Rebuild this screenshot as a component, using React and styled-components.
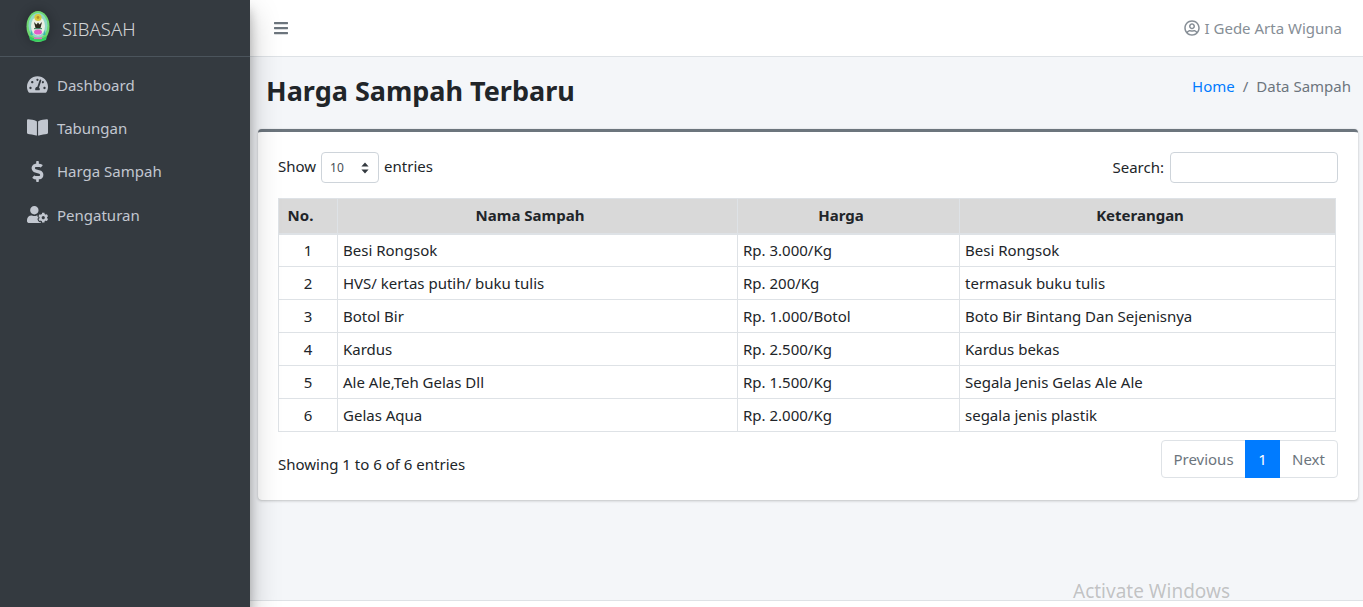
import styled, { createGlobalStyle } from "styled-components";
import {
  FaTachometerAlt,
  FaBookOpen,
  FaDollarSign,
  FaUserCog,
  FaBars,
  FaRegUserCircle,
} from "react-icons/fa";

const FONT = `"Noto Sans", "Open Sans", "Liberation Sans", sans-serif`;

const menu = [
  { icon: <FaTachometerAlt />, label: "Dashboard" },
  { icon: <FaBookOpen />, label: "Tabungan" },
  { icon: <FaDollarSign />, label: "Harga Sampah" },
  { icon: <FaUserCog />, label: "Pengaturan" },
];

const rows = [
  ["1", "Besi Rongsok", "Rp. 3.000/Kg", "Besi Rongsok"],
  ["2", "HVS/ kertas putih/ buku tulis", "Rp. 200/Kg", "termasuk buku tulis"],
  ["3", "Botol Bir", "Rp. 1.000/Botol", "Boto Bir Bintang Dan Sejenisnya"],
  ["4", "Kardus", "Rp. 2.500/Kg", "Kardus bekas"],
  ["5", "Ale Ale,Teh Gelas Dll", "Rp. 1.500/Kg", "Segala Jenis Gelas Ale Ale"],
  ["6", "Gelas Aqua", "Rp. 2.000/Kg", "segala jenis plastik"],
];

function Logo() {
  return (
    <svg width="24" height="31" viewBox="0 0 24 31">
      <ellipse cx="12" cy="15.5" rx="11.5" ry="15.5" fill="#6fd870" />
      <ellipse cx="12" cy="14.5" rx="9.5" ry="12.5" fill="#8fd8c8" />
      <ellipse cx="12" cy="15" rx="7" ry="9.5" fill="#e9efe2" />
      <circle cx="12" cy="6.5" r="3.6" fill="#d9c93f" />
      <circle cx="12" cy="6.5" r="1.4" fill="#b88f2a" />
      <path d="M8 11 L9.5 17 H14.5 L16 11 L13.5 13.5 L12 11.5 L10.5 13.5 Z" fill="#2c2a1e" />
      <rect x="8" y="17" width="8" height="1.2" fill="#4a8a6a" />
      <ellipse cx="12" cy="21" rx="4" ry="2.6" fill="#e060c8" />
      <path d="M5 19 L7 24 H4.5 Z M19 19 L17 24 H19.5 Z" fill="#38b8b0" />
      <path d="M3 25 Q12 31 21 25 L20 29 Q12 32 4 29 Z" fill="#33d060" />
      <rect x="8" y="26.5" width="8" height="1.6" fill="#e070c0" />
    </svg>
  );
}

export default function App() {
  return (
    <>
      <GlobalStyle />
      <Page>
        <Sidebar>
          <Brand>
            <LogoWrap>
              <Logo />
            </LogoWrap>
            <span>SIBASAH</span>
          </Brand>
          <Menu>
            {menu.map((item) => (
              <MenuItem key={item.label}>
                <MenuIcon>{item.icon}</MenuIcon>
                <span>{item.label}</span>
              </MenuItem>
            ))}
          </Menu>
        </Sidebar>
        <Main>
          <Navbar>
            <FaBars className="bars" />
            <UserName>
              <FaRegUserCircle />
              <span>I Gede Arta Wiguna</span>
            </UserName>
          </Navbar>
          <Content>
            <TitleRow>
              <h1>Harga Sampah Terbaru</h1>
              <Breadcrumb>
                <a>Home</a>
                <i>/</i>
                <span>Data Sampah</span>
              </Breadcrumb>
            </TitleRow>
            <Card>
              <TopControls>
                <Length>
                  <span>Show</span>
                  <SelectBox>
                    <span>10</span>
                    <Arrows viewBox="0 0 8 12">
                      <path d="M4 0.5 L7.6 4.6 H0.4 Z M4 11.5 L0.4 7.4 H7.6 Z" />
                    </Arrows>
                  </SelectBox>
                  <span>entries</span>
                </Length>
                <SearchLabel>
                  <span>Search:</span>
                  <SearchInput />
                </SearchLabel>
              </TopControls>
              <Table>
                <colgroup>
                  <col width="59" />
                  <col width="400" />
                  <col width="222" />
                  <col width="376" />
                </colgroup>
                <thead>
                  <tr>
                    <th>No.</th>
                    <th>Nama Sampah</th>
                    <th>Harga</th>
                    <th>Keterangan</th>
                  </tr>
                </thead>
                <tbody>
                  {rows.map((row) => (
                    <tr key={row[0]}>
                      {row.map((cell, i) => (
                        <Cell key={i} $center={i === 0}>
                          {cell}
                        </Cell>
                      ))}
                    </tr>
                  ))}
                </tbody>
              </Table>
              <BottomControls>
                <Info>Showing 1 to 6 of 6 entries</Info>
                <Pagination>
                  <PageButton $width={83}>Previous</PageButton>
                  <PageButton $width={35} $active>1</PageButton>
                  <PageButton $width={57}>Next</PageButton>
                </Pagination>
              </BottomControls>
            </Card>
          </Content>
          <Footer />
        </Main>
        <Watermark>Activate Windows</Watermark>
      </Page>
    </>
  );
}

const GlobalStyle = createGlobalStyle`
  * {
    box-sizing: border-box;
  }

  html, body {
    margin: 0;
    padding: 0;
    height: 100%;
    overflow: hidden;
    font-family: ${FONT};
    font-size: 15px;
    color: #212529;
  }
`;

const Page = styled.div`
  position: relative;
  display: flex;
  width: 1363px;
  height: 607px;
  overflow: hidden;
`;

const Sidebar = styled.aside`
  position: relative;
  z-index: 2;
  width: 250px;
  flex-shrink: 0;
  background-color: #343a40;
  box-shadow: 0 14px 28px rgba(0, 0, 0, 0.25), 0 10px 10px rgba(0, 0, 0, 0.22);
`;

const Brand = styled.div`
  display: flex;
  align-items: center;
  gap: 12px;
  height: 57px;
  padding-left: 26px;
  border-bottom: 1px solid #4b545c;
  color: rgba(255, 255, 255, 0.8);
  font-size: 18.5px;
  font-weight: 300;
`;

const LogoWrap = styled.div`
  display: flex;
  width: 24px;
  height: 31px;
  margin-top: -4px;
  border-radius: 50%;
  box-shadow: 0 0 8px 3px rgba(0, 0, 0, 0.16);
`;

const Menu = styled.nav`
  display: flex;
  flex-direction: column;
  padding-top: 6px;
`;

const MenuItem = styled.div`
  display: flex;
  align-items: center;
  gap: 9px;
  height: 43.3px;
  padding-left: 26px;
  color: #c2c7d0;
  font-size: 15px;
`;

const MenuIcon = styled.span`
  display: flex;
  justify-content: center;
  width: 22px;
  font-size: 21px;
`;

const Main = styled.div`
  display: flex;
  flex-direction: column;
  flex: 1;
  min-width: 0;
  background-color: #f4f6f9;
`;

const Navbar = styled.header`
  display: flex;
  align-items: center;
  justify-content: space-between;
  height: 57px;
  padding: 0 21px 0 23px;
  background-color: #fff;
  border-bottom: 1px solid #dee2e6;

  .bars {
    color: #6c757d;
    font-size: 16px;
  }
`;

const UserName = styled.div`
  display: flex;
  align-items: center;
  gap: 5px;
  color: #868e96;
  font-size: 15px;

  svg {
    font-size: 16px;
  }
`;

const Content = styled.main`
  flex: 1;
  padding: 0 5px 0 8px;
`;

const TitleRow = styled.div`
  display: flex;
  align-items: flex-start;
  justify-content: space-between;
  height: 72px;
  padding: 15px 7px 0 8px;

  h1 {
    margin: 0;
    font-size: 27px;
    line-height: 38px;
    font-weight: 700;
    color: #212529;
  }
`;

const Breadcrumb = styled.div`
  display: flex;
  gap: 8px;
  margin-top: -1px;
  font-size: 15px;
  line-height: 30px;
  color: #6c757d;

  a {
    color: #007bff;
  }

  i {
    font-style: normal;
  }
`;

const Card = styled.section`
  height: 371px;
  padding: 20px;
  background-color: #fff;
  border-top: 3px solid #6c757d;
  border-radius: 4px;
  box-shadow: 0 0 1px rgba(0, 0, 0, 0.125), 0 1px 3px rgba(0, 0, 0, 0.2);
`;

const TopControls = styled.div`
  display: flex;
  align-items: flex-start;
  justify-content: space-between;
  height: 46px;
  font-size: 15px;
`;

const Length = styled.label`
  display: flex;
  align-items: center;
  gap: 5px;
  height: 31px;

  > span {
    margin-bottom: 3px;
  }
`;

const SelectBox = styled.div`
  display: flex;
  align-items: center;
  justify-content: space-between;
  width: 58px;
  height: 31px;
  padding: 0 9px 0 8px;
  border: 1px solid #ced4da;
  border-radius: 4px;
  color: #495057;
  font-size: 12px;
`;

const Arrows = styled.svg`
  width: 8px;
  height: 12px;
  fill: #343a40;
`;

const SearchLabel = styled.label`
  display: flex;
  align-items: center;
  gap: 6px;
  height: 31px;

  > span {
    margin-bottom: 1px;
  }
`;

const SearchInput = styled.div`
  width: 168px;
  height: 31px;
  border: 1px solid #ced4da;
  border-radius: 4px;
`;

const Table = styled.table`
  width: 1057px;
  table-layout: fixed;
  border-collapse: collapse;
  font-size: 15px;

  th {
    height: 35px;
    padding: 0 20px 2px 5px;
    background-color: #d9d9d9;
    border: 1px solid #dee2e6;
    border-bottom-width: 2px;
    color: #212529;
    font-weight: 700;
    text-align: center;
  }

  tr {
    height: 33px;
  }
`;

const Cell = styled.td`
  padding: 0 5px;
  border: 1px solid #dee2e6;
  color: #212529;
  text-align: ${(props) => (props.$center ? "center" : "left")};
`;

const BottomControls = styled.div`
  display: flex;
  align-items: flex-start;
  justify-content: space-between;
  padding-top: 8px;
`;

const Info = styled.div`
  padding-top: 14px;
  font-size: 15px;
`;

const Pagination = styled.div`
  display: flex;
  height: 38px;
  border: 1px solid #dee2e6;
  border-radius: 4px;
`;

const PageButton = styled.div`
  display: flex;
  align-items: center;
  justify-content: center;
  width: ${(props) => props.$width}px;
  margin: ${(props) => (props.$active ? "-1px 0" : "0")};
  background-color: ${(props) => (props.$active ? "#007bff" : "transparent")};
  color: ${(props) => (props.$active ? "#fff" : "#6c757d")};
  font-size: 15px;
`;

const Footer = styled.footer`
  height: 7px;
  background-color: #fff;
  border-top: 1px solid #dee2e6;
`;

const Watermark = styled.div`
  position: absolute;
  top: 577px;
  left: 1073px;
  z-index: 3;
  color: rgba(130, 130, 130, 0.45);
  font-size: 19px;
  line-height: 28px;
`;
